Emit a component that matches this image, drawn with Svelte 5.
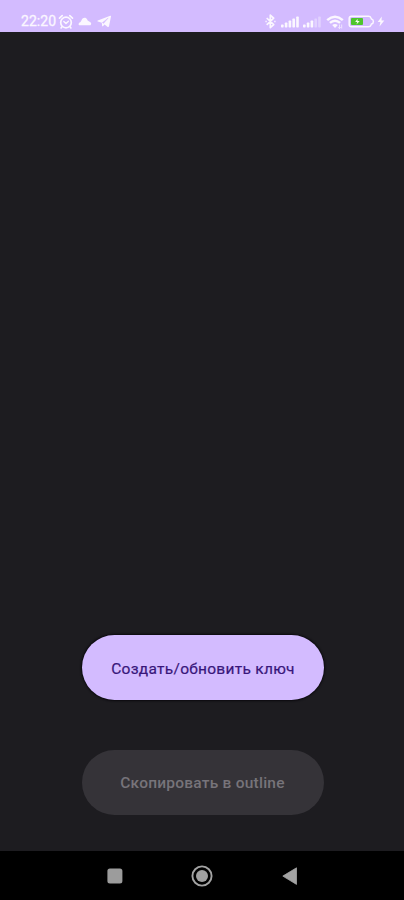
<script>
  const primaryBars = [3, 5, 7, 9, 11];
</script>

<div class="screen">
  <header class="status">
    <div class="left">
      <span class="time">22:20</span>
      <svg class="alarm" width="16" height="16" viewBox="0 0 16 16" fill="none" stroke="#fbf7ff" stroke-linecap="round">
        <circle cx="8" cy="8.5" r="5.3" stroke-width="1.7" />
        <path d="M1.5 4.1 4.2 1.6M14.5 4.1 11.8 1.6M3.8 13l-.7.9M12.2 13l.7.9" stroke-width="1.7" />
        <path d="M5.8 7.4 8 9.6l2.4-2.4" stroke-width="1.4" />
      </svg>
      <svg class="cloud" width="14" height="9" viewBox="0 0 14 9" fill="#fbf7ff">
        <path d="M1.8 8.2C.1 8.2.2 5.9 2.2 5.2 3 4.7 3.1 4.2 3.6 3.1 4.8.1 8 0 9.2 2.5c.4 1 .9 1.5 2 1.9 2.6.8 2.500 3.800.6 3.800Z" />
      </svg>
      <svg class="plane" width="15" height="13" viewBox="0 0 15 13" fill="#fbf7ff">
        <path d="M.8 5.5 13.2.8c.6-.2 1 .1.8.8l-2 9.7c-.2.8-.7 1-1.3.6L7.6 9.6l-1.7 1.6c-.4.3-.8.2-.8-.3L4.8 7.7.8 6.4c-.6-.2-.6-.7 0-.9Z" />
        <path d="m5.2 7.8 6-4.8-4.7 5.6" fill="#d3bbff" stroke="#d3bbff" stroke-width=".4" />
      </svg>
    </div>
    <div class="right">
      <svg width="11" height="15" viewBox="0 0 11 15" fill="none" stroke="#fbf7ff" stroke-width="1.7" stroke-linejoin="round">
        <path d="m1.7 4 7 6.6-3.4 3V1.2l3.4 3-7 6.6" />
        <path d="M.4 7.5h1.4M9.2 7.5h1.4" />
      </svg>
      <svg class="signal" width="18" height="12" viewBox="0 0 18 12" fill="#fbf7ff">
        {#each primaryBars as h, i}
          <rect x={i * 3.8} y={11.5 - h} width="2.6" height={h} rx=".7" />
        {/each}
      </svg>
      <svg class="signal second" width="18" height="12" viewBox="0 0 18 12" fill="#fbf7ff">
        {#each primaryBars as h, i}
          <rect x={i * 3.8} y={11.5 - h} width="2.6" height={h} rx=".7" opacity={i > 2 ? 0.38 : 1} />
        {/each}
      </svg>
      <svg class="wifi" width="18" height="14" viewBox="0 0 18 14" fill="none" stroke="#fbf7ff">
        <path d="M1.2 5.1Q9-1.6 16.8 5.1" stroke-width="2.5" />
        <path d="M3.9 7.9Q9 3.5 14.1 7.9" stroke-width="2.5" />
        <path d="m6.2 10 2.8 3 2.8-3Q9 7.8 6.2 10Z" fill="#fbf7ff" stroke="none" />
        <path d="M13.5 9.5v4m-1.3-1.2 1.3 1.2 1.3-1.2m.9 1.2v-4" stroke-width=".7" />
      </svg>
      <svg class="battery" width="27" height="13" viewBox="0 0 27 13">
        <path d="M3.5 1.2h17Q22.4 1.2 23 3l.5 1q1.9.5 1.9 2.5T23.5 9L23 10q-.6 1.8-2.5 1.8h-17Q1.2 11.8 1.2 9.5v-6Q1.2 1.2 3.5 1.2Z" fill="none" stroke="#fbf7ff" stroke-width="1.5" />
        <rect x="3" y="3" width="12" height="7" rx="1" fill="#4fc52d" />
        <path d="m9.5 3.7-2.3 3.4h2L8.5 9.6l3.2-3.5H9.6Z" fill="#efffe8" />
      </svg>
      <svg class="bolt" width="8" height="11" viewBox="0 0 8 11" fill="#fbf7ff">
        <path d="M4.8.6.7 6h2.7L2.5 10.4 7.3 4.6H4.5Z" />
      </svg>
    </div>
  </header>

  <main>
    <button class="create"><span>Создать/обновить ключ</span></button>
    <button class="copy" disabled><span>Скопировать в outline</span></button>
  </main>

  <nav>
    <svg width="16" height="16" viewBox="0 0 16 16"><rect x=".4" y=".6" width="15" height="15" rx="2.5" fill="#9c9c9c" /></svg>
    <svg class="home" width="22" height="22" viewBox="0 0 22 22"><circle cx="11" cy="11" r="9.6" fill="none" stroke="#a3a3a3" stroke-width="1.9" /><circle cx="11" cy="11" r="6" fill="#a0a0a0" /></svg>
    <svg class="back" width="16" height="18" viewBox="0 0 16 18"><path d="M14.5.8v16.6L.8 9.1Z" fill="#a3a3a3" stroke="#a3a3a3" stroke-width=".8" stroke-linejoin="round" /></svg>
  </nav>
</div>

<style>
  :global(body) { margin: 0; background: #1d1c20; }
  .screen {
    width: 404px;
    height: 900px;
    display: flex;
    flex-direction: column;
    background: #1d1c20;
    font-family: Roboto, "Noto Sans", sans-serif;
    overflow: hidden;
  }
  svg { display: block; flex: none; }
  .status {
    height: 32px;
    box-sizing: border-box;
    padding: 10px 19px 0 21px;
    background: #d3bbff;
    display: flex;
    justify-content: space-between;
    flex: none;
  }
  .left, .right { display: flex; align-items: center; height: 23px; }
  .time { width: 37px; color: #fbf7ff; font-size: 14px; line-height: 23px; letter-spacing: .05px; -webkit-text-stroke: .3px #fbf7ff; }
  .cloud { margin-left: 4px; }
  .plane { margin-left: 5px; }
  .signal { margin: 1px 0 0 5px; }
  .second { margin-left: 4px; }
  .wifi { margin-left: 5px; }
  .battery { margin-left: 4px; }
  .bolt { margin-left: 2px; }
  main {
    flex: 1;
    display: flex;
    flex-direction: column;
    align-items: center;
    justify-content: flex-end;
    gap: 50px;
    padding: 0 0 36px 1px;
  }
  button {
    width: 242px;
    height: 65px;
    box-sizing: border-box;
    padding: 0;
    border: 0;
    border-radius: 33px;
    font-family: inherit;
    font-size: 15.5px;
    line-height: 20px;
    white-space: nowrap;
  }
  .create { padding: 2px 0 0 1px; background: #d3bbff; color: #38167a; font-weight: 400; letter-spacing: .28px; -webkit-text-stroke: .2px #38167a; box-shadow: 0 0 2px 1px #0b090e; }
  .copy { background: #353338; color: #77747a; font-weight: 500; letter-spacing: .23px; }
  nav {
    height: 49px;
    flex: none;
    background: #000;
    display: flex;
    align-items: center;
    box-sizing: border-box;
    padding-left: 107px;
  }
  .home { margin-left: 68px; }
  .back { margin-left: 69px; }
</style>
